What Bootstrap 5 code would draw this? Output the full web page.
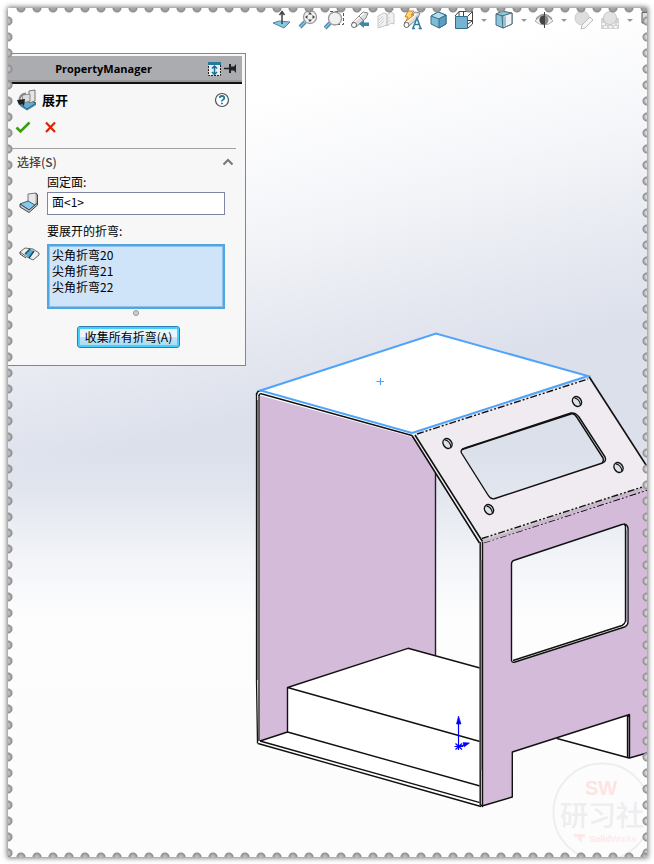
<!DOCTYPE html>
<html lang="zh-CN">
<head>
<meta charset="utf-8">
<meta name="viewport" content="width=device-width, initial-scale=1">
<title>PropertyManager</title>
<link href="https://cdn.jsdelivr.net/npm/bootstrap@5.3.0/dist/css/bootstrap.min.css" rel="stylesheet">
<style>
body{font-family:"Noto Sans CJK SC","Liberation Sans",sans-serif;font-size:12px;line-height:16px;color:#000;background:#fff;padding:8px 7px 7px 8px;min-height:100vh;display:flex}
.stage{background:linear-gradient(166deg,#fff 150px,rgba(255,255,255,.72) 260px,rgba(255,255,255,.35) 360px,rgba(255,255,255,0) 460px),linear-gradient(180deg,#dce0eb 440px,#e1e5ee 480px,#f2f4f8 550px,#fdfdfe 610px,#fcfcfc 100%);box-shadow:0 0 5px 1px #777}
.perf{position:absolute;pointer-events:none;z-index:5}
.perf-l{left:0;top:5px;bottom:0;width:6px;background:radial-gradient(circle at 0 8px,#c4c4c4 0,#b4b4b4 2px,#8c8c8c 4px,transparent 5px) 0 0/6px 16px repeat-y}
.perf-r{right:0;top:5px;bottom:0;width:6px;background:radial-gradient(circle at 6px 8px,#e4e4e4 0,#c8c8c8 2px,#8c8c8c 4px,transparent 5px) 0 0/6px 16px repeat-y}
.perf-t{left:5px;right:0;top:0;height:6px;background:radial-gradient(circle at 8px 0,#aaa 0,#a4a4a4 2px,#8c8c8c 4px,transparent 5px) 0 0/16px 6px repeat-x}
.perf-b{left:5px;right:0;bottom:0;height:6px;background:radial-gradient(circle at 8px 6px,#ccc 0,#b0b0b0 2px,#8c8c8c 4px,transparent 5px) 0 0/16px 6px repeat-x}
.view-bar{gap:6px;height:22px;padding-top:2px}
.tool{border:0;background:none;padding:0;display:flex;width:20px;height:20px;flex:none}
.tool-caret{width:8px;align-items:center}
.tool-cut{width:7px;overflow:hidden}
.pm{width:238px;margin-top:23px;background:#f7f7f7;border:1px solid #868686;border-left:0;padding:2px 3px 17px 0}
.pm-head{background:#abacb0;border-bottom:2px solid #111;height:28px;font:bold 11px/26px "Open Sans","Noto Sans",sans-serif;box-shadow:inset 0 -2px #98989c}
.pm-name{width:197px;text-align:center}
.pm-title{height:32px;padding:0 12px 0 8px}
.pm-title h1{font-size:13px;line-height:20px;font-weight:700;margin:0 0 0 4px}
.pm-acts{height:22px;padding-left:7px;gap:12px}
.rule{border-top:1px solid #a2a2a2;margin:10px 6px 0 0}
.sect{height:25px;padding:0 8px 0 9px;font-size:12px;font-weight:500;color:#444;border:0;background:none}
.pm-grid{display:grid;grid-template-columns:28px 178px;column-gap:0;padding-left:11px}
.cap{grid-column:2;height:18px;line-height:16px}
.cap-next{margin-top:8px;height:21px;line-height:16px}
.face-in{height:23px;border:1px solid #7e86a3;border-radius:0;padding:0 4px 4px;font-size:12px;line-height:16px;color:#000;background:#fff}
.bends{height:65px;border:2px solid #50a7e0;box-shadow:inset 0 0 0 1px #8fc2ee;background:#cfe4f8;border-radius:0;padding:0 1px;font:12px/16px "Noto Sans CJK SC",sans-serif;color:#000;overflow:hidden;outline:0}
.bends option{padding:0 2px;height:16px;min-height:16px;line-height:14px}
.knob{width:6px;height:6px;border:1px solid #999;border-radius:50%;background:#ccc;margin:1px 0 10px 125px}
.collect{margin-left:69px;width:103px;height:22px;border:1px solid #2c7fb0;border-radius:3px;box-shadow:inset 0 0 0 2px #43d0fb;background:linear-gradient(#eaf6fd 50%,#bee6fa 50%,#a9dbf5);font-size:12px;line-height:18px;padding:0;color:#000;white-space:nowrap}
</style>
<script src="https://cdn.jsdelivr.net/npm/bootstrap@5.3.0/dist/js/bootstrap.bundle.min.js"></script>
</head>
<body>
<main class="stage position-relative overflow-hidden flex-grow-1">
  <!-- sheet-metal model -->
  <svg class="position-absolute top-0 start-0 w-100 h-100" viewBox="8 8 639 849" preserveAspectRatio="xMaxYMid meet" role="img" aria-label="钣金模型">
    <defs><linearGradient id="bend" gradientUnits="userSpaceOnUse" x1="560" y1="512" x2="562" y2="518"><stop offset="0" stop-color="#e8e2e9"/><stop offset=".6" stop-color="#c4b6c6"/><stop offset="1" stop-color="#d5bbda"/></linearGradient></defs>
    <g stroke-linejoin="round" stroke="#111" stroke-width="1.4" fill="none">
      <path d="M259 394 412 436 435 474V656L408 648 287 687V732L260 741Z" fill="#d5bbda" stroke="none"/>
      <path d="M435.500 473V655" stroke="#222"/>
      <path d="M287 687.500 408 648.500 480 668V802L259 741 287 732Z" fill="#fff" stroke="none"/>
      <path d="M480 668 408 648.300 287.500 687.500V732L260 741M287.500 687.500 480 741.500M287.500 732 480 786"/>
      <path d="M260 741 480 803 481 806.500 258 743.500Z" fill="#fff" stroke="none"/>
      <path d="M260 741 480 802.700M258 743.500 481 806.500"/>
      <path d="M256.500 394V738L258 743.500 259.500 741V394Z" fill="#fff" stroke="none"/>
      <path d="M256.500 393V680L257.500 743.500M259 395V741" stroke-width="1.300"/>
      <path d="M257.500 400V680" stroke="#777" stroke-width="1"/>
      <path d="M261 390 436 333 588 376 412 433Z" fill="#fff" stroke="none"/>
      <path d="M259 391 412 433 415 435 412 437 258 395Z" fill="#fff" stroke="none"/>
      <path d="M256.500 395Q257 390 262 390.500M259 396Q259 393 262 394L412 435.500"/>
      <path d="M414 434 588 378 647 467V491L482 543Z M461.500 453Q460 449.500 465 448L571 413Q575 412 579 417L605 457Q607 462 601 463.500L495 498.500Q491 500 488 495Z" fill="#f0ebf1" fill-rule="evenodd" stroke="none"/>
      <path d="M482 539 647 485.500V491L483 543.500Z" fill="url(#bend)" stroke="none"/>
      <path d="M412 435 479 543 483 542 415 435Z" fill="#eee" stroke="none"/>
      <path d="M412 435.500 479.500 543M415 435 482.500 541.500" stroke-width="1.600"/>
      <path d="M589 376.500 647 466.500" stroke-width="1.600"/>
      <path d="M417 434 588 379" stroke-dasharray="7 2 2 2 2 2"/>
      <path d="M482 538.500 647 485.500M484 543.500 647 490.500" stroke-dasharray="7 2 2 2 2 2"/>
      <path d="M461.500 453Q460 449.500 465 448L571 413Q575 412 579 417L605 457Q607 462 601 463.500L495 498.500Q491 500 488 495Z"/>
      <path d="M462 449.500 571 414Q574 413 577 417.500L603 458Q604 461 602 463"/>
      <g stroke-width="1.500" fill="#dde1ea">
        <g id="hole"><ellipse cx="447.500" cy="443.500" rx="4.200" ry="5.200" transform="rotate(-35 447.500 443.500)"/><path d="M445 440Q450 441 451 447" stroke-width="1.200"/></g>
        <use href="#hole" x="129.500" y="-42"/><use href="#hole" x="171" y="24"/><use href="#hole" x="41.500" y="66"/>
      </g>
      <path d="M557 738.500 628 714V758Z" fill="#fff" stroke="none"/>
      <path d="M482 544 647 491V753L629.500 758V714L512.500 752V797L482 806Z M511.500 565Q511 561 515 560L622 524.500Q627 523 628 528V622Q628 626 623 627.500L515 662Q511.500 663 511.500 660Z" fill="#d5bbda" fill-rule="evenodd" stroke="none"/>
      <path d="M482 806 512.300 797V752L629.500 714.500V758L647 753M557 738.500 629 758"/>
      <path d="M628 715V758" stroke-width="2.400"/><path d="M628.500 717V757" stroke="#888" stroke-width=".8"/>
      <path d="M479.500 543V804L482 806.500 483 806V542Z" fill="#ddd" stroke="none"/>
      <path d="M480.200 542V804.500L482.500 806.500V542"/><path d="M481 560V770" stroke="#555" stroke-width="1"/>
      <path d="M511.500 565Q511 561 515 560L622 524.500Q627 523 628 528V622Q628 626 623 627.500L515 662Q511.500 663 511.500 660Z"/>
      <path d="M624 524Q626 525 625.500 528V621Q625 624 622 625.500L513 660.500"/><path d="M626.800 530V622" stroke="#889" stroke-width="1.200"/>
    </g>
    <path d="M260.500 390.500 436 333.500 588 376 412 433Z" fill="none" stroke="#4fa3fb" stroke-width="2"/>
    <path d="M376.500 381.500H384M380.500 378V385" stroke="#4fa3fb" stroke-width="1.200"/>
    <g stroke="#00f" stroke-width="1.200" fill="#00f"><path d="M458.500 750V722M454.500 746.500H463M455.500 743.500 462 749.500M455.500 749.500 462 743.500M458.500 746.500 464 745" fill="none"/><path d="M458.500 716 456.500 724H461ZM469.500 743 463 742.500 464 747Z" stroke-width=".6"/></g>
    <g><circle cx="602" cy="812" r="48.500" fill="none" stroke="#eee" stroke-width="2"/>
      <text x="601" y="795" text-anchor="middle" font-family="Liberation Sans,sans-serif" font-weight="700" font-size="20" fill="#fce4e2">SW</text>
      <text x="560" y="826" font-family="Noto Sans CJK SC,sans-serif" font-weight="500" font-size="28" fill="#eeeeef">研习社</text>
      <path d="M574 834H585V837H582V843L579 840 577 837H574Z" fill="#fbe8e8"/>
      <text x="589" y="842" font-family="Liberation Sans,sans-serif" font-size="9" fill="#fce8e7"><tspan font-weight="700">Solid</tspan>Works</text></g>
  </svg>

  <!-- view toolbar -->
  <nav class="view-bar d-flex justify-content-end position-relative" aria-label="视图">
    <button class="tool" type="button" aria-label="正视于"><svg width="20" height="20"><path d="M1 13 7 11 18 12 12 18Z" fill="#8bc5dc" stroke="#4b8aa6"/><path d="M10 14V3M7.500 5 10 1.500 12.500 5" stroke="#444" stroke-width="1.500" fill="none"/></svg></button>
    <button class="tool" type="button" aria-label="整屏显示"><svg width="20" height="20"><path d="M2 17 7 12" stroke="#4d8aab" stroke-width="4"/><path d="M2 17 7 12" stroke="#8bc3dd" stroke-width="1.500"/><circle cx="12" cy="7" r="6.500" fill="#eff2f4" stroke="#999" stroke-width="1.300"/><path d="M12 2 14 4.500H10ZM12 12 14 9.500H10ZM7 7 9.500 5V9ZM17 7 14.500 5V9Z" fill="#444"/></svg></button>
    <button class="tool" type="button" aria-label="局部放大"><svg width="20" height="20"><path d="M6 1.500H19.500V14.500H13" fill="none" stroke="#555" stroke-dasharray="3 2"/><path d="M1 18 6 13" stroke="#4d8aab" stroke-width="4"/><path d="M1 18 6 13" stroke="#8bc3dd" stroke-width="1.500"/><circle cx="11" cy="8.500" r="6.500" fill="#eff1f2" stroke="#999" stroke-width="1.300"/></svg></button>
    <button class="tool" type="button" aria-label="上一视图"><svg width="20" height="20"><path d="M2 13 13 2 18 3 16 8 6 17Z" fill="#dedede" stroke="#888"/><path d="M4 12 14 3" stroke="#fff" stroke-width="1.500"/><circle cx="4" cy="15" r="2.500" fill="#fff" stroke="#666"/><path d="M9 6 13 10" stroke="#888"/><path d="M9 14 14 10V12.500H19V16H14V18Z" fill="#3f86a8"/></svg></button>
    <button class="tool" type="button" aria-label="剖面视图"><svg width="20" height="20"><path d="M2 6 8 3 11 4V15L8 16 2 18ZM11 5 15 2 18 4V14L15 13 11 16Z" fill="#f1f1f1" stroke="#c6c6c6"/><path d="M3 10 7 6M3 13 8 8M3 16 8 11M12 9 14 7M12 12 14 10" stroke="#d2d2d2"/></svg></button>
    <button class="tool" type="button" aria-label="动态注解视图"><svg width="20" height="20"><path d="M2 13 13 2 18 3 16 8 6 17Z" fill="#dedede" stroke="#888"/><path d="M5 12 14 4" stroke="#fff" stroke-width="1.500"/><circle cx="4.500" cy="15" r="2.500" fill="#fff" stroke="#666"/><path d="M6 1H12L9 5H12L4 11 6 7H3Z" fill="#ffdb67" stroke="#d97b22"/><path d="M11 18 15 8 18.500 18M10 18.500H13M16.500 18.500H20M12 14.500H17" fill="none" stroke="#347da2" stroke-width="1.500"/></svg></button>
    <button class="tool" type="button" aria-label="视图定向"><svg width="20" height="20" stroke="#356f8b"><path d="M3 6 10 2 18 5V14L11 18 3 14Z" fill="#7fbbd4"/><path d="M3 6 10 2 18 5 11 9Z" fill="#b5deee"/><path d="M11 9 18 5V14L11 18Z" fill="#5a9fbe"/></svg></button>
    <button class="tool" type="button" aria-label="显示样式"><svg width="20" height="20"><path d="M5 6V1.500H18.500V14L14 18M14 6 18.500 1.500M1 6 5 1.500M9.500 6V1.500M14 10.500H18M14 14 18 11" fill="none" stroke="#444"/><path d="M1.500 6.500H13.500V18.500H1.500Z" fill="#76b5d1" stroke="#326c89"/></svg></button>
    <button class="tool tool-caret" type="button" aria-label="显示样式选项"><svg width="8" height="8"><path d="M1 3H7L4 6Z" fill="#999"/></svg></button>
    <button class="tool" type="button" aria-label="显示类型"><svg width="20" height="20" stroke="#4b6978"><path d="M2 4 8 1 18 3V14L9 18 2 15Z" fill="#8bc6df"/><path d="M8 6 18 3V14L9 18Z" fill="#f0f3f6"/><path d="M2 4 9 6V18" fill="none"/><path d="M9 7 12 6V16L9 17Z" fill="#8bc6df" stroke="none"/></svg></button>
    <button class="tool tool-caret" type="button" aria-label="显示类型选项"><svg width="8" height="8"><path d="M1 3H7L4 6Z" fill="#999"/></svg></button>
    <button class="tool" type="button" aria-label="隐藏/显示项目"><svg width="20" height="20"><path d="M1 11Q10 0 19 11 10 19 1 11Z" fill="#f4f4f4" stroke="#aaa"/><path d="M2 9Q10 0 18 9" fill="none" stroke="#999" stroke-width="1.500"/><circle cx="10" cy="10" r="4.500" fill="#888"/><path d="M10 5.500A4.500 4.500 0 0 0 10 14.500Z" fill="#444"/><path d="M10.500 2V18" stroke="#444"/></svg></button>
    <button class="tool tool-caret" type="button" aria-label="隐藏选项"><svg width="8" height="8"><path d="M1 3H7L4 6Z" fill="#999"/></svg></button>
    <button class="tool" type="button" aria-label="编辑外观" disabled><svg width="20" height="20"><circle cx="8" cy="8" r="7" fill="#dedede" stroke="#ccc"/><path d="M7 19 8 15 16 7 19 10 11 18Z" fill="#f6f6f6" stroke="#bbb"/></svg></button>
    <button class="tool" type="button" aria-label="应用布景" disabled><svg width="20" height="20"><path d="M1 8H19V19H1Z" fill="#d4d4d4"/><path d="M2 14H18M4 17H18" stroke="#f4f4f4" stroke-width="2" stroke-dasharray="3 2"/><circle cx="10" cy="8" r="6.500" fill="#e2e2e2" stroke="#c7c7c7"/></svg></button>
    <button class="tool tool-caret" type="button" aria-label="布景选项"><svg width="8" height="8"><path d="M1 3H7L4 6Z" fill="#999"/></svg></button>
    <button class="tool tool-cut" type="button" aria-label="视图设置"><svg width="20" height="20"><path d="M2 2.500H20V13H2Z" fill="#ddd" stroke="#555"/></svg></button>
  </nav>

  <!-- property panel -->
  <form class="pm position-relative">
    <div class="pm-head d-flex align-items-center">
      <span class="pm-name">PropertyManager</span>
      <svg class="ms-2" width="36" height="18" aria-hidden="true"><path d="M1.500 3V15.500H13.500V3" fill="#e8eef2" stroke="#222" stroke-dasharray="2 1"/><path d="M1 2H14V5H1Z" fill="#24799d"/><path d="M7.500 6V14M5 8.500 7.500 6 10 8.500M5 12 7.500 14.500 10 12" fill="none" stroke="#1e6d91" stroke-width="1.500"/><path d="M17 8.500H24" stroke="#222" stroke-width="1.500"/><path d="M22 4H24V6.500H27L29 4V13L27 10.500H24V13H22Z" fill="#222"/></svg>
    </div>
    <div class="pm-title d-flex align-items-center">
      <svg width="22" height="22" aria-hidden="true"><path d="M4 15 13 11 20 14 11 20Z" fill="#62afd4" stroke="#24526b"/><path d="M4 15V17L11 21.500 20 16V14L11 20Z" fill="#3d83a5"/><path d="M13 2 19 1V12L13 14Z" fill="#e6e6e6" stroke="#777"/><path d="M6 6 14 5V12L7 14Z" fill="#dcdcdc" stroke="#888"/><path d="M10 4.500Q3 5 3.500 13" fill="none" stroke="#888" stroke-width="2"/><path d="M1 11 9 10 8 17 6 15 3 16Z" fill="#222"/></svg>
      <h1>展开</h1>
      <button class="ms-auto border-0 bg-transparent p-0 d-flex" type="button" aria-label="帮助"><svg width="16" height="16"><circle cx="8" cy="8" r="6.500" fill="#fff" stroke="#44525d" stroke-width="1.200"/><path d="M5.700 6Q5.700 4 8 4T10.300 6Q10.300 7 9 7.700T8 9.500M8 10.700V12.300" fill="none" stroke="#24789c" stroke-width="1.800"/></svg></button>
    </div>
    <div class="pm-acts d-flex align-items-center">
      <button class="border-0 bg-transparent p-0 d-flex" type="submit" aria-label="确定"><svg width="16" height="16"><path d="M1.500 8.500 5.500 12.500 14.500 3.500" fill="none" stroke="#38a00e" stroke-width="2.600"/></svg></button>
      <button class="border-0 bg-transparent p-0 d-flex" type="button" aria-label="取消"><svg width="16" height="16"><path d="M3 3.500 12 13M12 3.500 3 13" stroke="#e02200" stroke-width="2.200"/></svg></button>
    </div>
    <div class="rule"></div>
    <button class="sect w-100 d-flex align-items-center justify-content-between" type="button" aria-expanded="true"><span>选择(S)</span><svg width="12" height="12"><path d="M1.500 8.500 6 4 10.500 8.500" fill="none" stroke="#777" stroke-width="2"/></svg></button>
    <div class="pm-grid">
      <label class="cap" for="face">固定面:</label>
      <svg width="22" height="22" aria-hidden="true"><path d="M9 2 17 1 18 11 16 15 9 10Z" fill="#e8e8e8" stroke="#777"/><path d="M17 1 18.500 3V12L16 14" fill="#aaa" stroke="#444"/><path d="M1 12 9 9 16 13 10 18Z" fill="#85caec" stroke="#27627d"/><path d="M1 12V15L10 20.500 18.500 13V11L10 18Z" fill="#ccc" stroke="#444"/></svg>
      <input class="face-in w-100" id="face" type="text" value="面&lt;1&gt;">
      <label class="cap cap-next" for="bends">要展开的折弯:</label>
      <svg width="22" height="22" aria-hidden="true"><path d="M1 8 6 4 14 5 20 9V11L14 16 8 13Z" fill="#f0f0f0" stroke="#666"/><path d="M1 8V10L7 14" fill="none" stroke="#444"/><path d="M6 10 11 5 15 7 10 14Z" fill="#51acd1"/><path d="M6 10 11 5M10 14 15 7" stroke="#174d66" stroke-width="1.500"/></svg>
      <select class="bends w-100" id="bends" multiple size="4"><option>尖角折弯20</option><option>尖角折弯21</option><option>尖角折弯22</option></select>
    </div>
    <div class="knob"></div>
    <button class="collect d-block" type="button">收集所有折弯(A)</button>
  </form>

  <div class="perf perf-l"></div><div class="perf perf-r"></div><div class="perf perf-t"></div><div class="perf perf-b"></div>
</main>
</body>
</html>
